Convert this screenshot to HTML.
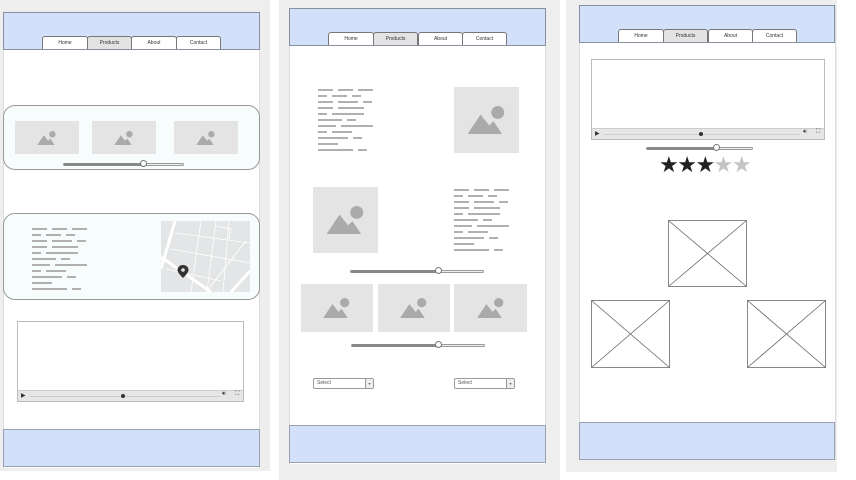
<!DOCTYPE html>
<html><head><meta charset="utf-8">
<style>
*{margin:0;padding:0;box-sizing:border-box}
body{width:856px;height:480px;background:#fff;position:relative;overflow:hidden;font-family:"Liberation Sans",sans-serif}
.a{position:absolute}
.gray{background:#eeeeee}
.page{background:#fff;border-left:1px solid #ddd;border-right:1px solid #ddd}
.hdr{background:#d2e0fa;border:1px solid #8a8fa0}
.ftr{background:#d2e0fa;border:1px solid #9aa0b0}
.tab{position:absolute;height:13px;border:1px solid #777;border-bottom:none;border-radius:3px 3px 0 0;background:#fff;font-size:5px;color:#333;text-align:center;line-height:12px}
.tab.sel{background:#e3e3e3}
.img{position:absolute;background:#e4e4e4}
.img svg{position:absolute;left:50%;top:50%;transform:translate(-50%,-50%)}
.tb{position:absolute}
.tb .r{display:flex;gap:5px;height:6px;align-items:flex-start}
.tb .r i{display:block;height:2px;background:#b0b0b0}
.sl{position:absolute;height:3px;border:1px solid #999;border-radius:2px;background:#eee}
.sl b{position:absolute;left:0;top:-1px;height:3px;background:#888;border-radius:2px}
.sl u{position:absolute;top:-4px;width:7px;height:7px;border-radius:50%;background:#fff;border:1px solid #777;margin-left:-3.5px}
.vid{position:absolute;border:1px solid #bbb;background:#fff}
.vbar{position:absolute;left:0;right:0;bottom:0;height:11px;background:#e6e6e6;border-top:1px solid #ccc}
.sel2{position:absolute;width:61px;height:11px;border:1px solid #999;border-radius:2px;background:#fff;font-size:5px;color:#555;line-height:9px;padding-left:3px}
.sel2 span{position:absolute;right:0;top:0;width:8px;height:9px;border-left:1px solid #999;background:#eee;font-size:4px;text-align:center}
</style></head><body>

<div class="a gray" style="left:0;top:0;width:270px;height:471px"></div>
<div class="a gray" style="left:279px;top:0;width:281px;height:480px"></div>
<div class="a gray" style="left:566px;top:0;width:271px;height:472px"></div>

<!-- PANEL 1 -->
<div class="a page" style="left:3px;top:12px;width:257px;height:456px"></div>
<div class="a hdr" style="left:3px;top:12px;width:257px;height:38px"></div>
<div class="tab" style="left:42px;top:36px;width:46px">Home</div>
<div class="tab sel" style="left:87px;top:36px;width:45px">Products</div>
<div class="tab" style="left:131px;top:36px;width:46px">About</div>
<div class="tab" style="left:176px;top:36px;width:45px">Contact</div>

<div class="a" style="left:3px;top:105px;width:257px;height:65px;border:1px solid #999;border-radius:12px;background:#f7fdfd"></div>
<div class="img" style="left:15px;top:121px;width:64px;height:33px"><svg width="20" height="14" viewBox="0 0 18 13"><circle cx="14" cy="3" r="3" fill="#aaa"/><path d="M0 13 L6 4 L10 9 L12 7 L16 13Z" fill="#aaa"/></svg></div>
<div class="img" style="left:92px;top:121px;width:64px;height:33px"><svg width="20" height="14" viewBox="0 0 18 13"><circle cx="14" cy="3" r="3" fill="#aaa"/><path d="M0 13 L6 4 L10 9 L12 7 L16 13Z" fill="#aaa"/></svg></div>
<div class="img" style="left:174px;top:121px;width:64px;height:33px"><svg width="20" height="14" viewBox="0 0 18 13"><circle cx="14" cy="3" r="3" fill="#aaa"/><path d="M0 13 L6 4 L10 9 L12 7 L16 13Z" fill="#aaa"/></svg></div>
<div class="sl" style="left:63px;top:163px;width:121px"><b style="width:79px"></b><u style="left:79px"></u></div>

<div class="a" style="left:3px;top:213px;width:257px;height:87px;border:1px solid #999;border-radius:12px;background:#f7fdfd"></div>
<div class="tb" style="left:32px;top:228px">
<div class="r"><i style="width:15px"></i><i style="width:15px"></i><i style="width:15px"></i></div>
<div class="r"><i style="width:9px"></i><i style="width:15px"></i><i style="width:9px"></i></div>
<div class="r"><i style="width:15px"></i><i style="width:20px"></i><i style="width:9px"></i></div>
<div class="r"><i style="width:15px"></i><i style="width:26px"></i></div>
<div class="r"><i style="width:9px"></i><i style="width:32px"></i></div>
<div class="r"><i style="width:24px"></i><i style="width:9px"></i></div>
<div class="r"><i style="width:18px"></i><i style="width:32px"></i></div>
<div class="r"><i style="width:9px"></i><i style="width:20px"></i></div>
<div class="r"><i style="width:30px"></i><i style="width:9px"></i></div>
<div class="r"><i style="width:20px"></i></div>
<div class="r"><i style="width:35px"></i><i style="width:9px"></i></div>
</div>
<div class="a" style="left:161px;top:221px;width:89px;height:71px;background:#e3e5e6;overflow:hidden">
<svg width="89" height="71" viewBox="0 0 89 71">
<g stroke="#fff" fill="none">
<path d="M14 0 L0 48" stroke-width="3"/>
<path d="M0 36 L50 71" stroke-width="3"/>
<path d="M89 50 L70 71" stroke-width="3"/>
<path d="M40 0 L30 71 M55 0 L46 71 M68 0 L62 71" stroke-width="0.8"/>
<path d="M14 12 L89 22 M10 28 L89 42 M5 48 L60 60" stroke-width="0.8"/>
<path d="M85 20 L45 71" stroke-width="1"/>
<path d="M55 5 L70 8 L68 18" stroke-width="0.8"/>
</g>
<path d="M22 44 C18 44 16.5 47 16.5 49 C16.5 52 22 57 22 57 C22 57 27.5 52 27.5 49 C27.5 47 26 44 22 44Z" fill="#333"/>
<circle cx="22" cy="49" r="1.8" fill="#e3e5e6"/>
</svg></div>

<div class="vid" style="left:17px;top:321px;width:227px;height:81px">
<div class="vbar"><span class="a" style="left:3px;top:1px;font-size:6px;color:#333">▶</span>
<div class="a" style="left:12px;top:5px;width:190px;height:1px;background:#ccc"></div>
<div class="a" style="left:103px;top:3px;width:4px;height:4px;border-radius:50%;background:#333"></div>
<span class="a" style="left:204px;top:0px;font-size:6px;color:#444">🔊︎</span>
<span class="a" style="left:217px;top:0px;font-size:6px;color:#444">⛶</span></div></div>

<div class="a ftr" style="left:3px;top:429px;width:257px;height:38px"></div>

<!-- PANEL 2 -->
<div class="a page" style="left:289px;top:8px;width:257px;height:456px"></div>
<div class="a hdr" style="left:289px;top:8px;width:257px;height:38px"></div>
<div class="tab" style="left:328px;top:32px;width:46px">Home</div>
<div class="tab sel" style="left:373px;top:32px;width:45px">Products</div>
<div class="tab" style="left:418px;top:32px;width:45px">About</div>
<div class="tab" style="left:462px;top:32px;width:45px">Contact</div>

<div class="tb" style="left:318px;top:89px">
<div class="r"><i style="width:15px"></i><i style="width:15px"></i><i style="width:15px"></i></div>
<div class="r"><i style="width:9px"></i><i style="width:15px"></i><i style="width:9px"></i></div>
<div class="r"><i style="width:15px"></i><i style="width:20px"></i><i style="width:9px"></i></div>
<div class="r"><i style="width:15px"></i><i style="width:26px"></i></div>
<div class="r"><i style="width:9px"></i><i style="width:32px"></i></div>
<div class="r"><i style="width:24px"></i><i style="width:9px"></i></div>
<div class="r"><i style="width:18px"></i><i style="width:32px"></i></div>
<div class="r"><i style="width:9px"></i><i style="width:20px"></i></div>
<div class="r"><i style="width:30px"></i><i style="width:9px"></i></div>
<div class="r"><i style="width:20px"></i></div>
<div class="r"><i style="width:35px"></i><i style="width:9px"></i></div>
</div>
<div class="img" style="left:454px;top:87px;width:65px;height:66px"><svg width="40" height="28" viewBox="0 0 18 13"><circle cx="14" cy="3" r="3" fill="#aaa"/><path d="M0 13 L6 4 L10 9 L12 7 L16 13Z" fill="#aaa"/></svg></div>
<div class="img" style="left:313px;top:187px;width:65px;height:66px"><svg width="40" height="28" viewBox="0 0 18 13"><circle cx="14" cy="3" r="3" fill="#aaa"/><path d="M0 13 L6 4 L10 9 L12 7 L16 13Z" fill="#aaa"/></svg></div>
<div class="tb" style="left:454px;top:189px">
<div class="r"><i style="width:15px"></i><i style="width:15px"></i><i style="width:15px"></i></div>
<div class="r"><i style="width:9px"></i><i style="width:15px"></i><i style="width:9px"></i></div>
<div class="r"><i style="width:15px"></i><i style="width:20px"></i><i style="width:9px"></i></div>
<div class="r"><i style="width:15px"></i><i style="width:26px"></i></div>
<div class="r"><i style="width:9px"></i><i style="width:32px"></i></div>
<div class="r"><i style="width:24px"></i><i style="width:9px"></i></div>
<div class="r"><i style="width:18px"></i><i style="width:32px"></i></div>
<div class="r"><i style="width:9px"></i><i style="width:20px"></i></div>
<div class="r"><i style="width:30px"></i><i style="width:9px"></i></div>
<div class="r"><i style="width:20px"></i></div>
<div class="r"><i style="width:35px"></i><i style="width:9px"></i></div>
</div>
<div class="sl" style="left:350px;top:270px;width:134px"><b style="width:87px"></b><u style="left:87px"></u></div>
<div class="img" style="left:301px;top:284px;width:72px;height:48px"><svg width="28" height="20" viewBox="0 0 18 13"><circle cx="14" cy="3" r="3" fill="#aaa"/><path d="M0 13 L6 4 L10 9 L12 7 L16 13Z" fill="#aaa"/></svg></div>
<div class="img" style="left:378px;top:284px;width:72px;height:48px"><svg width="28" height="20" viewBox="0 0 18 13"><circle cx="14" cy="3" r="3" fill="#aaa"/><path d="M0 13 L6 4 L10 9 L12 7 L16 13Z" fill="#aaa"/></svg></div>
<div class="img" style="left:454px;top:284px;width:73px;height:48px"><svg width="28" height="20" viewBox="0 0 18 13"><circle cx="14" cy="3" r="3" fill="#aaa"/><path d="M0 13 L6 4 L10 9 L12 7 L16 13Z" fill="#aaa"/></svg></div>
<div class="sl" style="left:351px;top:344px;width:134px"><b style="width:86px"></b><u style="left:86px"></u></div>
<div class="sel2" style="left:313px;top:378px">Select<span>▾</span></div>
<div class="sel2" style="left:454px;top:378px">Select<span>▾</span></div>
<div class="a ftr" style="left:289px;top:425px;width:257px;height:38px"></div>

<!-- PANEL 3 -->
<div class="a page" style="left:579px;top:5px;width:257px;height:455px"></div>
<div class="a hdr" style="left:579px;top:5px;width:256px;height:38px"></div>
<div class="tab" style="left:618px;top:29px;width:46px">Home</div>
<div class="tab sel" style="left:663px;top:29px;width:45px">Products</div>
<div class="tab" style="left:708px;top:29px;width:45px">About</div>
<div class="tab" style="left:752px;top:29px;width:45px">Contact</div>

<div class="vid" style="left:591px;top:59px;width:234px;height:81px">
<div class="vbar"><span class="a" style="left:3px;top:1px;font-size:6px;color:#333">▶</span>
<div class="a" style="left:12px;top:5px;width:196px;height:1px;background:#ccc"></div>
<div class="a" style="left:107px;top:3px;width:4px;height:4px;border-radius:50%;background:#333"></div>
<span class="a" style="left:211px;top:0px;font-size:6px;color:#444">🔊︎</span>
<span class="a" style="left:224px;top:0px;font-size:6px;color:#444">⛶</span></div></div>
<div class="sl" style="left:646px;top:147px;width:107px"><b style="width:69px"></b><u style="left:69px"></u></div>
<div class="a" style="left:659px;top:153px;font-size:22px;letter-spacing:-1.5px;font-family:'DejaVu Sans',sans-serif;line-height:26px"><span style="color:#222">★★★</span><span style="color:#c4c4c4">★★</span></div>

<svg class="a" style="left:668px;top:220px" width="79" height="67"><rect x="0.5" y="0.5" width="78" height="66" fill="#fff" stroke="#888"/><path d="M0.5 0.5 L78.5 66.5 M78.5 0.5 L0.5 66.5" stroke="#666" stroke-width="0.8"/></svg>
<svg class="a" style="left:591px;top:300px" width="79" height="68"><rect x="0.5" y="0.5" width="78" height="67" fill="#fff" stroke="#888"/><path d="M0.5 0.5 L78.5 67.5 M78.5 0.5 L0.5 67.5" stroke="#666" stroke-width="0.8"/></svg>
<svg class="a" style="left:747px;top:300px" width="79" height="68"><rect x="0.5" y="0.5" width="78" height="67" fill="#fff" stroke="#888"/><path d="M0.5 0.5 L78.5 67.5 M78.5 0.5 L0.5 67.5" stroke="#666" stroke-width="0.8"/></svg>

<div class="a ftr" style="left:579px;top:422px;width:256px;height:38px"></div>
</body></html>
